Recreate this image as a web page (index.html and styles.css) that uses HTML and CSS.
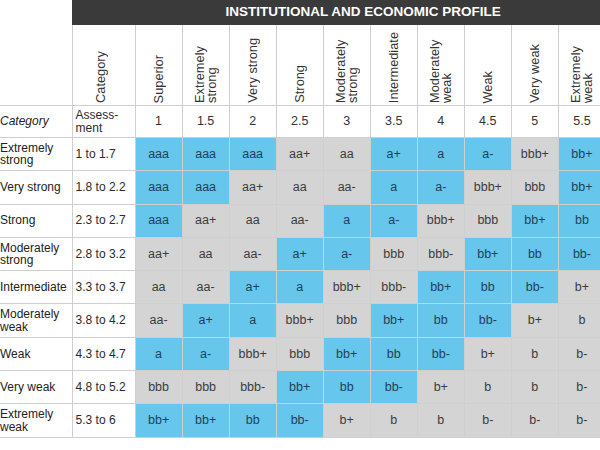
FILE: index.html
```html
<!DOCTYPE html>
<html>
<head>
<meta charset="utf-8">
<link rel="stylesheet" href="styles.css">
</head>
<body>
<table class="grid">
  <colgroup>
    <col class="c-label"><col class="c-assess">
    <col class="c-data"><col class="c-data"><col class="c-data"><col class="c-data"><col class="c-data">
    <col class="c-data"><col class="c-data"><col class="c-data"><col class="c-data"><col class="c-data">
  </colgroup>
  <tr class="r-title">
    <td class="corner" rowspan="2"></td>
    <td class="title" colspan="11">INSTITUTIONAL AND ECONOMIC PROFILE</td>
  </tr>
  <tr class="r-rot">
    <td class="rot rot-cat"><div>Category</div></td>
    <td class="rot"><div>Superior</div></td>
    <td class="rot"><div>Extremely strong</div></td>
    <td class="rot"><div>Very strong</div></td>
    <td class="rot"><div>Strong</div></td>
    <td class="rot"><div>Moderately strong</div></td>
    <td class="rot"><div>Intermediate</div></td>
    <td class="rot"><div>Moderately weak</div></td>
    <td class="rot"><div>Weak</div></td>
    <td class="rot"><div>Very weak</div></td>
    <td class="rot"><div>Extremely weak</div></td>
  </tr>
  <tr class="r-assess">
    <td class="lbl cat">Category</td>
    <td class="asm">Assess-<br>ment</td>
    <td class="num">1</td><td class="num">1.5</td><td class="num">2</td><td class="num">2.5</td><td class="num">3</td>
    <td class="num">3.5</td><td class="num">4</td><td class="num">4.5</td><td class="num">5</td><td class="num">5.5</td>
  </tr>
  <tr class="r-data">
    <td class="lbl">Extremely strong</td><td class="asm">1 to 1.7</td>
    <td class="b">aaa</td><td class="b">aaa</td><td class="b">aaa</td><td class="g">aa+</td><td class="g">aa</td>
    <td class="b">a+</td><td class="b">a</td><td class="b">a-</td><td class="g">bbb+</td><td class="b">bb+</td>
  </tr>
  <tr class="r-data">
    <td class="lbl">Very strong</td><td class="asm">1.8 to 2.2</td>
    <td class="b">aaa</td><td class="b">aaa</td><td class="g">aa+</td><td class="g">aa</td><td class="g">aa-</td>
    <td class="b">a</td><td class="b">a-</td><td class="g">bbb+</td><td class="g">bbb</td><td class="b">bb+</td>
  </tr>
  <tr class="r-data">
    <td class="lbl">Strong</td><td class="asm">2.3 to 2.7</td>
    <td class="b">aaa</td><td class="g">aa+</td><td class="g">aa</td><td class="g">aa-</td><td class="b">a</td>
    <td class="b">a-</td><td class="g">bbb+</td><td class="g">bbb</td><td class="b">bb+</td><td class="b">bb</td>
  </tr>
  <tr class="r-data">
    <td class="lbl">Moderately strong</td><td class="asm">2.8 to 3.2</td>
    <td class="g">aa+</td><td class="g">aa</td><td class="g">aa-</td><td class="b">a+</td><td class="b">a-</td>
    <td class="g">bbb</td><td class="g">bbb-</td><td class="b">bb+</td><td class="b">bb</td><td class="b">bb-</td>
  </tr>
  <tr class="r-data">
    <td class="lbl">Intermediate</td><td class="asm">3.3 to 3.7</td>
    <td class="g">aa</td><td class="g">aa-</td><td class="b">a+</td><td class="b">a</td><td class="g">bbb+</td>
    <td class="g">bbb-</td><td class="b">bb+</td><td class="b">bb</td><td class="b">bb-</td><td class="g">b+</td>
  </tr>
  <tr class="r-data">
    <td class="lbl">Moderately weak</td><td class="asm">3.8 to 4.2</td>
    <td class="g">aa-</td><td class="b">a+</td><td class="b">a</td><td class="g">bbb+</td><td class="g">bbb</td>
    <td class="b">bb+</td><td class="b">bb</td><td class="b">bb-</td><td class="g">b+</td><td class="g">b</td>
  </tr>
  <tr class="r-data">
    <td class="lbl">Weak</td><td class="asm">4.3 to 4.7</td>
    <td class="b">a</td><td class="b">a-</td><td class="g">bbb+</td><td class="g">bbb</td><td class="b">bb+</td>
    <td class="b">bb</td><td class="b">bb-</td><td class="g">b+</td><td class="g">b</td><td class="g">b-</td>
  </tr>
  <tr class="r-data">
    <td class="lbl">Very weak</td><td class="asm">4.8 to 5.2</td>
    <td class="g">bbb</td><td class="g">bbb</td><td class="g">bbb-</td><td class="b">bb+</td><td class="b">bb</td>
    <td class="b">bb-</td><td class="g">b+</td><td class="g">b</td><td class="g">b</td><td class="g">b-</td>
  </tr>
  <tr class="r-data">
    <td class="lbl">Extremely weak</td><td class="asm">5.3 to 6</td>
    <td class="b">bb+</td><td class="b">bb+</td><td class="b">bb</td><td class="b">bb-</td><td class="g">b+</td>
    <td class="g">b</td><td class="g">b</td><td class="g">b-</td><td class="g">b-</td><td class="g">b-</td>
  </tr>
</table>
</body>
</html>
```
FILE: styles.css
```css
html, body {
  margin: 0;
  padding: 0;
  background: #ffffff;
  overflow: hidden;
}
body {
  font-family: "Liberation Sans", Arial, sans-serif;
  font-size: 12px;
  color: #2b2b2b;
}
.grid {
  border-collapse: collapse;
  table-layout: fixed;
  width: 606px;
}
.c-label { width: 72px; }
.c-assess { width: 63px; }
.c-data { width: 47px; }
.grid td {
  border: 1px solid #cfcfcf;
  padding: 0;
  line-height: 12.5px;
}
.r-title td.title {
  height: 24px;
  background: #3a3a3a;
  color: #ffffff;
  font-weight: bold;
  font-size: 13.5px;
  line-height: 16px;
  padding-left: 153px;
  border: 1px solid #3a3a3a;
  border-right: none;
  border-top: none;
}
.corner {
  border: none !important;
  border-bottom: 1px solid #cfcfcf !important;
}
.r-rot td { height: 78px; }
.grid td.rot {
  vertical-align: bottom;
  text-align: center;
  line-height: 0;
  padding-bottom: 2px;
}
.rot div {
  display: inline-block;
  vertical-align: bottom;
  writing-mode: vertical-rl;
  transform: rotate(180deg);
  text-align: left;
  font-size: 12.8px;
  line-height: 12px;
  color: #333333;
}
.rot-cat div { margin-right: 6px; }
.r-assess td { height: 31px; }
.r-data td { height: 32.3px; }
.grid td.lbl {
  border-left: none;
  padding-left: 0;
  color: #222222;
}
.cat { font-style: italic; }
.grid td.asm {
  padding-left: 3px;
  color: #2b2b2b;
}
.num {
  text-align: center;
  font-size: 12.5px;
  color: #333333;
}
.b, .g {
  text-align: center;
  font-size: 12.5px;
}
.b {
  background: #66c6ec;
  color: #1f4258;
}
.g {
  background: #d4d4d4;
  color: #3c3c3c;
}
```
